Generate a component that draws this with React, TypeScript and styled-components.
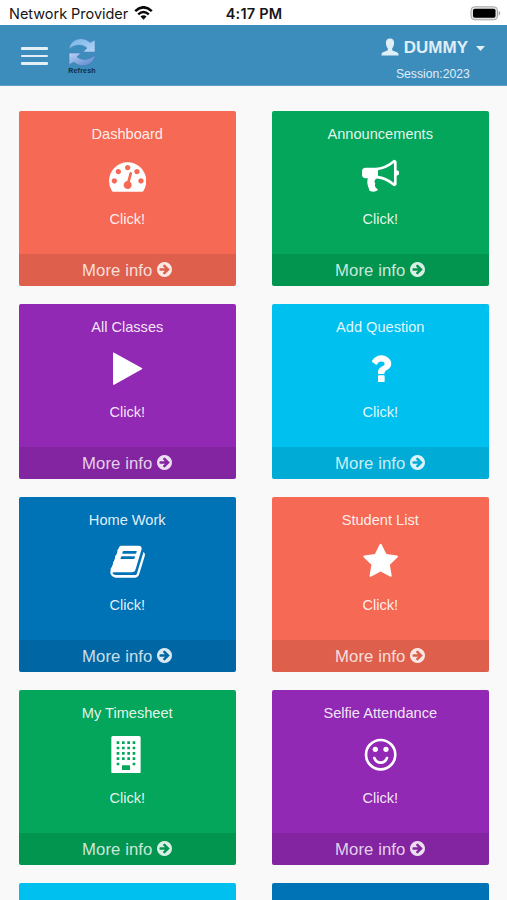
import React from "react";
import styled, { createGlobalStyle } from "styled-components";

const GlobalStyle = createGlobalStyle`
  * { box-sizing: border-box; }
  body { margin: 0; background: #f9f9f9; }
`;

const Screen = styled.div`
  height: 900px;
  overflow: hidden;
  background: #f9f9f9;
  font-family: "Liberation Sans", Arial, sans-serif;
`;

const StatusBar = styled.header`
  height: 25px;
  display: grid;
  grid-template-columns: 1fr auto 1fr;
  align-items: center;
  padding: 2px 6px 0 9px;
  background: #fff;
  color: #161616;
  font-family: Inter, sans-serif;
  font-size: 14.5px;
  line-height: 20px;
`;

const Carrier = styled.div`
  display: flex;
  align-items: center;
  gap: 6px;
  letter-spacing: -0.03px;
  white-space: nowrap;

  svg {
    margin-top: -2px;
  }
`;

const Clock = styled.div`
  margin-right: 2px;
  font-weight: 600;
  letter-spacing: 0.2px;
`;

const Battery = styled.svg`
  justify-self: end;
  display: block;
`;

const Navbar = styled.nav`
  height: 61px;
  display: flex;
  align-items: flex-start;
  background: #3c8dbc;
  border-bottom: 1px solid #5b9fc9;
  padding: 0 22px 0 21px;
`;

const MenuButton = styled.div`
  width: 27px;
  display: flex;
  flex-direction: column;
  gap: 5px;
  margin-top: 22px;
`;

const MenuBar = styled.span`
  height: 2.5px;
  border-radius: 1px;
  background: #e3f0f8;
`;

const RefreshButton = styled.div`
  width: 32px;
  margin: 13px 0 0 18px;
  display: flex;
  flex-direction: column;
  align-items: center;
`;

const RefreshLabel = styled.span`
  font-size: 7px;
  line-height: 8px;
  font-weight: 700;
  letter-spacing: 0.2px;
  color: #0d2c44;
`;

const Account = styled.div`
  margin-left: auto;
  display: flex;
  flex-direction: column;
  align-items: center;
  color: #e0eef7;
`;

const UserRow = styled.div`
  display: flex;
  align-items: center;
  height: 20px;
  margin-top: 12px;
  font-size: 17px;
  font-weight: 700;

  svg:last-child {
    margin-top: 3px;
  }
`;

const UserName = styled.span`
  margin: 0 8px 0 5px;
  padding-top: 1px;
`;

const Session = styled.div`
  margin-top: 10px;
  font-size: 12.2px;
  line-height: 15px;
`;

const Grid = styled.main`
  display: grid;
  grid-template-columns: 216.5px 216.5px;
  grid-auto-rows: 174.5px;
  column-gap: 36.5px;
  row-gap: 18.5px;
  padding: 25px 0 0 19px;
`;

const Card = styled.section<{ $color: string }>`
  display: flex;
  flex-direction: column;
  align-items: center;
  border-radius: 2px;
  overflow: hidden;
  background: ${(p) => p.$color};
  color: rgba(255, 255, 255, 0.9);
`;

const Title = styled.h3`
  margin: 14px 0 0;
  font-size: 14.6px;
  line-height: 18px;
  font-weight: 400;
`;

const Glyph = styled.svg`
  display: block;
  flex: none;
  width: 37.3px;
  height: 37.3px;
  margin-top: 14px;
  fill: #fff;
`;

const Action = styled.p`
  margin: 16px 0 0;
  font-size: 14.6px;
  line-height: 18px;
`;

const CardFooter = styled.footer`
  display: flex;
  align-items: center;
  justify-content: center;
  align-self: stretch;
  flex: none;
  gap: 5px;
  height: 31.5px;
  margin-top: auto;
  padding-top: 2px;
  background: rgba(0, 0, 0, 0.1);
  color: rgba(255, 255, 255, 0.8);
  font-size: 16.7px;
  letter-spacing: 0.1px;
`;

const FooterIcon = styled.svg`
  width: 15px;
  height: 15px;
  margin-top: -2px;
  fill: rgba(255, 255, 255, 0.85);
`;

const paths = {
  gauge:
    "M384 1152q0-53-37.5-90.5t-90.5-37.5-90.5 37.5-37.5 90.5 37.5 90.5 90.5 37.5 90.5-37.5 37.5-90.5zm192-448q0-53-37.5-90.5t-90.5-37.5-90.5 37.5-37.5 90.5 37.5 90.5 90.5 37.5 90.5-37.5 37.5-90.5zm428 481l101-382q6-26-7.5-48.5t-38.5-29.5-48 6.5-30 39.5l-101 382q-60 5-107 43.5t-63 98.5q-20 77 20 146t117 89 146-20 89-117q16-60-6-117t-72-91zm660-33q0-53-37.5-90.5t-90.5-37.5-90.5 37.5-37.5 90.5 37.5 90.5 90.5 37.5 90.5-37.5 37.5-90.5zm-640-640q0-53-37.5-90.5t-90.5-37.5-90.5 37.5-37.5 90.5 37.5 90.5 90.5 37.5 90.5-37.5 37.5-90.5zm448 192q0-53-37.5-90.5t-90.5-37.5-90.5 37.5-37.5 90.5 37.5 90.5 90.5 37.5 90.5-37.5 37.5-90.5zm320 448q0 261-141 483-19 29-54 29h-1402q-35 0-54-29-141-221-141-483 0-182 71-348t191-286 286-191 348-71 348 71 286 191 191 286 71 348z",
  bullhorn:
    "M1664 640q53 0 90.5 37.5t37.5 90.5-37.5 90.5-90.5 37.5v384q0 52-38 90t-90 38q-417-347-812-380-58 19-91 66t-31 100.5 40 92.5q-20 33-23 65.5t6 58 33.5 55 48 50 61.5 50.5q-29 58-111.5 83t-168.5 11.5-132-55.5q-7-23-29.5-87.5t-32-94.5-23-89-15-101 3.5-98.5 22-110.5h-122q-66 0-113-47t-47-113v-192q0-66 47-113t113-47h480q435 0 896-384 52 0 90 38t38 90v384zm-128 604v-954q-394 302-768 343v270q377 42 768 341z",
  play: "M1576 927l-1328 738q-23 13-39.5 3t-16.5-36v-1472q0-26 16.5-36t39.5 3l1328 738q23 13 23 31t-23 31z",
  question:
    "M1088 1256v240q0 16-12 28t-28 12h-240q-16 0-28-12t-12-28v-240q0-16 12-28t28-12h240q16 0 28 12t12 28zm316-600q0 54-15.5 101t-35 76.5-55 59.5-57.5 43.5-61 35.5q-41 23-68.5 65t-27.5 67q0 17-12 32.5t-28 15.5h-240q-15 0-25.5-18.5t-10.5-37.5v-45q0-83 65-156.5t143-108.5q59-27 84-56t25-76q0-42-46.5-74t-107.5-32q-65 0-108 29-35 25-107 115-13 16-31 16-12 0-25-8l-164-125q-13-10-15.5-25t5.5-28q160-266 464-266 80 0 161 31t146 83 106 127.5 41 158.5z",
  book: "M1703 478q40 57 18 129l-275 906q-19 64-76.5 107.5t-122.5 43.5h-923q-77 0-148.5-53.5t-99.5-131.5q-24-67-2-127 0-4 3-27t4-37q1-8-3-21.5t-3-19.5q2-11 8-21t16.5-23.5 16.5-23.5q23-38 45-91.5t30-91.5q3-10 .5-30t-.5-28q3-11 17-28t17-23q21-36 42-92t25-90q1-9-2.5-32t.5-28q4-13 22-30.5t22-22.5q19-26 42.5-84.5t27.5-96.5q1-8-3-25.5t-2-26.5q2-8 9-18t18-23 17-21q8-12 16.5-30.5t15-35 16-36 19.5-32 26.5-23.5 36-11.5 47.5 5.5l-1 3q38-9 51-9h761q74 0 114 56t18 130l-274 906q-36 119-71.5 153.5t-128.5 34.5h-869q-27 0-38 15-11 16-1 43 24 70 144 70h923q29 0 56-15.5t35-41.5l300-987q7-22 5-57 38 15 59 43zm-1064 2q-4 13 2 22.5t20 9.5h608q13 0 25.5-9.5t16.5-22.5l21-64q4-13-2-22.5t-20-9.5h-608q-13 0-25.5 9.5t-16.5 22.5zm-83 256q-4 13 2 22.5t20 9.5h608q13 0 25.5-9.5t16.5-22.5l21-64q4-13-2-22.5t-20-9.5h-608q-13 0-25.5 9.5t-16.5 22.5z",
  star: "M1728 647q0 22-26 48l-363 354 86 500q1 7 1 20 0 21-10.5 35.5t-30.5 14.5q-19 0-40-12l-449-236-449 236q-22 12-40 12-21 0-31.5-14.5t-10.5-35.5q0-6 2-20l86-500-364-354q-25-27-25-48 0-37 56-46l502-73 225-455q19-41 49-41t49 41l225 455 502 73q56 9 56 46z",
  smile:
    "M1262 1075q-37 121-138 195t-228 74-228-74-138-195q-8-25 4-48.5t38-31.5q25-8 48.5 4t31.5 38q25 80 92.5 129.5t151.5 49.5 151.5-49.5 92.5-129.5q8-26 32-38t49-4 37 31.5 4 48.5zM768 640a128 128 0 1 1-256 0a128 128 0 1 1 256 0zM1280 640a128 128 0 1 1-256 0a128 128 0 1 1 256 0zM896 128a768 768 0 1 0 0 1536a768 768 0 1 0 0-1536zm0 128a640 640 0 1 1 0 1280a640 640 0 1 1 0-1280z",
  building:
    "M176 0h1280q26 0 45 19t19 45v1664q0 26-19 45t-45 19h-1280q-26 0-45-19t-19-45v-1664q0-26 19-45t45-19z" +
    [256, 512, 768, 1024, 1280]
      .flatMap((y) =>
        [368, 624, 880, 1136]
          .filter((x) => y < 1280 || x === 368 || x === 1136)
          .map((x) => `M${x} ${y}v128h128v-128z`)
      )
      .join("") +
    "M624 1408v224h384v-224z",
  arrow:
    "M1413 896q0-27-18-45l-91-91-362-362q-18-18-45-18t-45 18l-91 91q-18 18-18 45t18 45l189 189h-502q-26 0-45 19t-19 45v128q0 26 19 45t45 19h502l-189 189q-19 19-19 45t19 45l91 91q18 18 45 18t45-18l362-362 91-91q18-18 18-45zm251 0q0 209-103 385.5t-279.5 279.5-385.5 103-385.5-103-279.5-279.5-103-385.5 103-385.5 279.5-279.5 385.5-103 385.5 103 279.5 279.5 103 385.5z",
};

type IconName = keyof typeof paths;

const coral = "#f66a55";
const green = "#03a65a";
const purple = "#9229b4";
const cyan = "#00c0ef";
const blue = "#0073b7";

const cards: { title: string; icon: IconName; color: string }[] = [
  { title: "Dashboard", icon: "gauge", color: coral },
  { title: "Announcements", icon: "bullhorn", color: green },
  { title: "All Classes", icon: "play", color: purple },
  { title: "Add Question", icon: "question", color: cyan },
  { title: "Home Work", icon: "book", color: blue },
  { title: "Student List", icon: "star", color: coral },
  { title: "My Timesheet", icon: "building", color: green },
  { title: "Selfie Attendance", icon: "smile", color: purple },
];

const WifiIcon = () => (
  <svg width="19" height="14" viewBox="0 0 19 14" fill="none" stroke="#080808">
    <path d="M1.2 5.1Q9.5-2.5 17.8 5.1" strokeWidth="2.6" />
    <path d="M4.2 8.3Q9.5 3.6 14.8 8.3" strokeWidth="2.4" />
    <path d="M6.5 10.6Q9.5 8 12.5 10.6L9.5 13.7Z" fill="#080808" stroke="none" />
  </svg>
);

const RefreshIcon = () => (
  <svg width="30" height="29" viewBox="0 0 30 29">
    <defs>
      <linearGradient id="arrowTop" x1="0" y1="0" x2="1" y2="1">
        <stop offset="0" stopColor="#78b4e6" />
        <stop offset="1" stopColor="#b3d4f6" />
      </linearGradient>
      <linearGradient id="arrowBottom" x1="0" y1="0" x2="1" y2="1">
        <stop offset="0" stopColor="#b9d2f5" />
        <stop offset="1" stopColor="#5684cc" />
      </linearGradient>
    </defs>
    <path
      d="M2 11C4 0 16-2 23 4.5L28 2V14H16L20 10C15 6 8 6 2 11Z"
      fill="url(#arrowTop)"
      stroke="#4d86be"
      strokeWidth=".6"
    />
    <path
      d="M28 17C27 28 14 31 7 24L2 27V15H14L10 19C16 23 22 22 28 17Z"
      fill="url(#arrowBottom)"
      stroke="#4779b9"
      strokeWidth=".6"
    />
  </svg>
);

const UserIcon = () => (
  <svg width="18" height="18" viewBox="0 0 18 18" fill="currentColor">
    <path d="M9 .5C6.2.5 4.8 2.4 4.9 5C5 7.7 5.9 9.2 6.8 10.3V12.2C5.5 13.1 1.2 14 .7 15.4L.4 17.5H17.6L17.3 15.4C16.8 14 12.5 13.1 11.2 12.2V10.3C12.1 9.2 13 7.7 13.1 5C13.2 2.4 11.8.5 9 .5Z" />
  </svg>
);

export default function App() {
  return (
    <Screen>
      <GlobalStyle />
      <StatusBar>
        <Carrier>
          Network Provider
          <WifiIcon />
        </Carrier>
        <Clock>4:17 PM</Clock>
        <Battery width="31" height="15" viewBox="0 0 31 15">
          <rect x="1" y=".8" width="26.5" height="13" rx="3.6" fill="#e4e4e4" stroke="#a5a5a5" />
          <rect x="3" y="2.8" width="22.5" height="9" rx="1.8" fill="#000" />
          <path d="M28.7 5v4.6c2-.7 2-3.9 0-4.6z" fill="#a5a5a5" />
        </Battery>
      </StatusBar>
      <Navbar>
        <MenuButton>
          <MenuBar />
          <MenuBar />
          <MenuBar />
        </MenuButton>
        <RefreshButton>
          <RefreshIcon />
          <RefreshLabel>Refresh</RefreshLabel>
        </RefreshButton>
        <Account>
          <UserRow>
            <UserIcon />
            <UserName>DUMMY</UserName>
            <svg width="9" height="5" viewBox="0 0 9 5" fill="currentColor">
              <path d="M0 0h9L4.5 5z" />
            </svg>
          </UserRow>
          <Session>Session:2023</Session>
        </Account>
      </Navbar>
      <Grid>
        {cards.map((card) => (
          <Card key={card.title} $color={card.color}>
            <Title>{card.title}</Title>
            <Glyph viewBox="0 0 1792 1792">
              <path d={paths[card.icon]} fillRule="evenodd" />
            </Glyph>
            <Action>Click!</Action>
            <CardFooter>
              More info
              <FooterIcon viewBox="128 128 1536 1536">
                <path d={paths.arrow} fillRule="evenodd" />
              </FooterIcon>
            </CardFooter>
          </Card>
        ))}
        <Card $color={cyan} />
        <Card $color={blue} />
      </Grid>
    </Screen>
  );
}
